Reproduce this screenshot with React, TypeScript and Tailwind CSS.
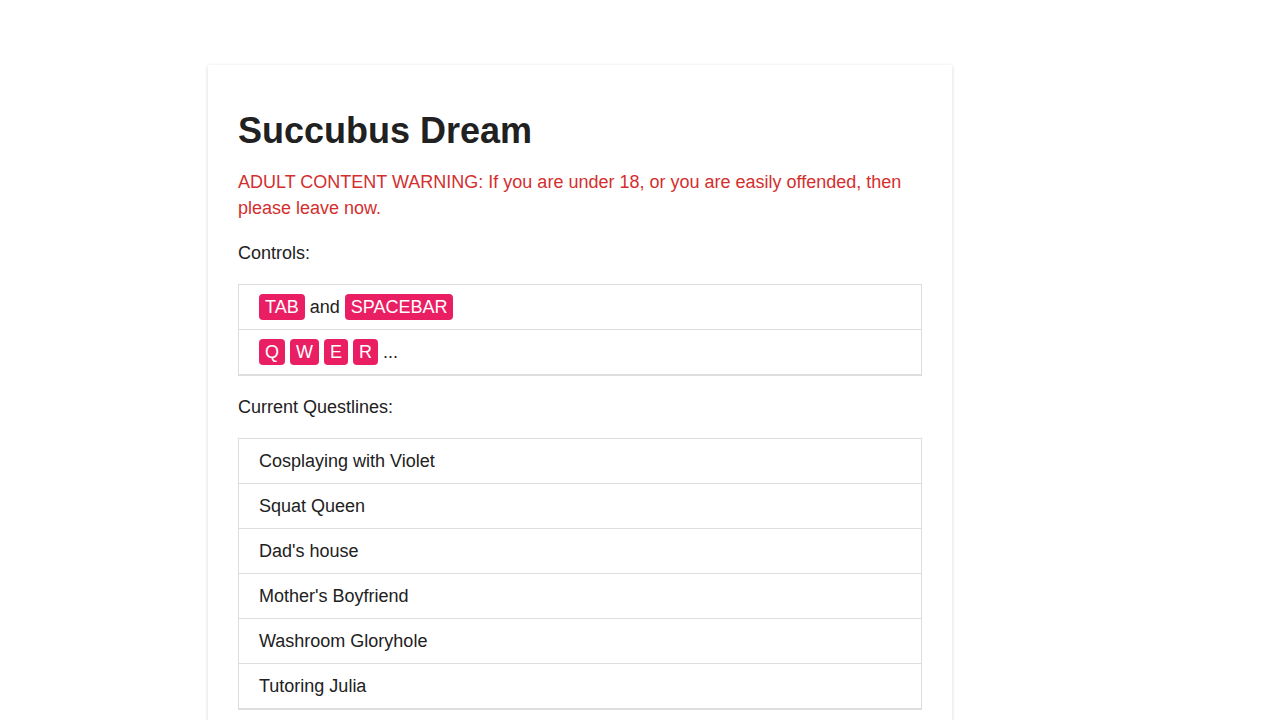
const quests = [
  'Cosplaying with Violet',
  'Squat Queen',
  "Dad's house",
  "Mother's Boyfriend",
  'Washroom Gloryhole',
  'Tutoring Julia',
];

function Key({ k }: { k: string }) {
  return (
    <span className="inline-block rounded-[4px] bg-[#e91e63] px-[6px] leading-[26px] text-white">{k}</span>
  );
}

export default function App() {
  return (
    <div className="min-h-screen bg-white font-['Liberation_Sans',Arial,sans-serif] text-[#212121]">
      <div className="pl-[208px] pt-[65px]">
        <div className="w-[744px] bg-white px-[30px] pt-[30px] pb-[30px] shadow-[0_1px_4px_rgba(0,0,0,0.16)]">
          <h1 className="mt-[14px] text-[36px] font-bold leading-[43px]">Succubus Dream</h1>
          <p className="mt-[17px] text-[18px] leading-[26px] text-[#d32f2f]">
            ADULT CONTENT WARNING: If you are under 18, or you are easily offended, then please leave now.
          </p>
          <p className="mt-[19px] text-[18px] leading-[26px]">Controls:</p>
          <ul className="mt-[18px] border border-b-2 border-[#ddd] text-[18px]">
            <li className="flex h-[44px] items-center gap-[5px] px-[20px]">
              <Key k="TAB" />
              <span>and</span>
              <Key k="SPACEBAR" />
            </li>
            <li className="flex h-[45px] items-center gap-[5px] border-t border-[#ddd] px-[20px]">
              <Key k="Q" />
              <Key k="W" />
              <Key k="E" />
              <Key k="R" />
              <span>...</span>
            </li>
          </ul>
          <p className="mt-[18px] text-[18px] leading-[26px]">Current Questlines:</p>
          <ul className="mt-[18px] border border-b-2 border-[#ddd] text-[18px]">
            {quests.map((q, i) => (
              <li
                key={q}
                className={`flex items-center px-[20px] ${i === 0 ? 'h-[44px]' : 'h-[45px] border-t border-[#ddd]'}`}
              >
                {q}
              </li>
            ))}
          </ul>
        </div>
      </div>
    </div>
  );
}
